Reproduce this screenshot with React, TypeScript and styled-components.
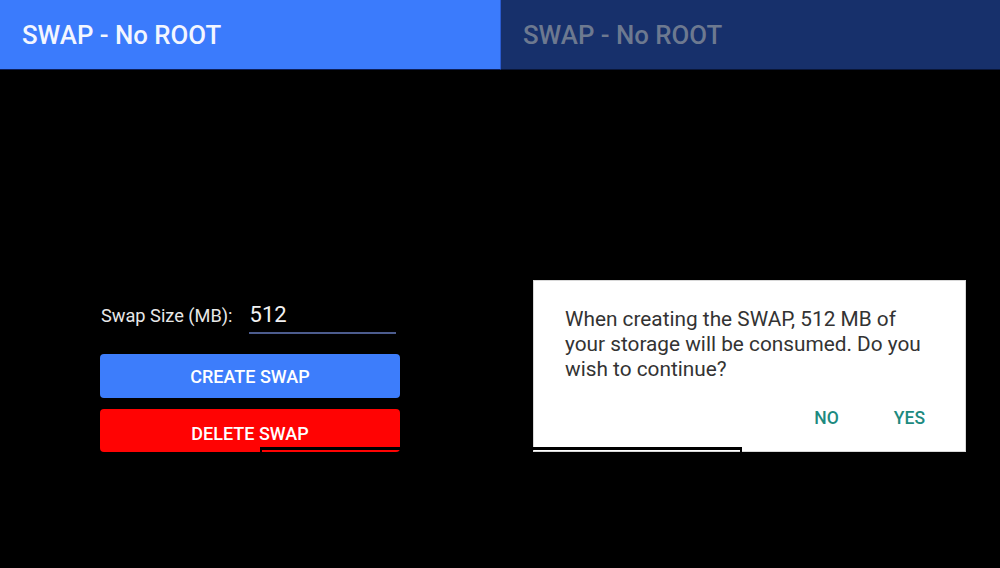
import React from "react";
import styled, { createGlobalStyle } from "styled-components";

const Global = createGlobalStyle`
  html, body { margin: 0; padding: 0; background: #000; }
  body { font-family: Roboto, "Noto Sans", "Liberation Sans", sans-serif; }
`;

const Screen = styled.div`
  position: relative;
  display: grid;
  grid-template-columns: 500px 500px;
  width: 1000px;
  height: 568px;
  background: #000;
  overflow: hidden;
`;

const Pane = styled.div`
  display: flex;
  flex-direction: column;
  min-width: 0;
`;

const AppBar = styled.header<{ $dim?: boolean }>`
  height: 70px;
  box-sizing: border-box;
  display: flex;
  align-items: center;
  padding-left: 22px;
  background: ${(p) => (p.$dim ? "#17306b" : "#3b7bfc")};
  border-left: ${(p) => (p.$dim ? "1px solid #2a5bd0" : "none")};
  border-bottom: 1px solid ${(p) => (p.$dim ? "#0a1638" : "#0d1f5a")};
`;

const Title = styled.h1<{ $dim?: boolean }>`
  margin: 0;
  font-size: 25.8px;
  font-weight: 500;
  color: ${(p) => (p.$dim ? "#6d7990" : "#f3f6ff")};
`;

const Body = styled.div<{ $top: number }>`
  flex: 1;
  padding-top: ${(p) => p.$top}px;
  box-sizing: border-box;
`;

const Form = styled.div`
  margin-left: 100px;
  width: 300px;
  display: flex;
  flex-direction: column;
`;

const SizeRow = styled.div`
  display: flex;
  align-items: baseline;
  gap: 16px;
  padding-left: 1px;
`;

const Label = styled.span`
  font-size: 18.2px;
  color: #e8e8e8;
`;

const Field = styled.div`
  width: 146px;
  font-size: 22px;
  line-height: 26px;
  color: #f2f2f2;
  padding-left: 1px;
  padding-bottom: 4px;
  border-bottom: 2px solid #4c5c8e;
`;

const ActionButton = styled.button<{ $color: string; $h: number; $mt: number; $pt?: number }>`
  margin-top: ${(p) => p.$mt}px;
  height: ${(p) => p.$h}px;
  width: 300px;
  border: none;
  border-radius: 4px;
  background: ${(p) => p.$color};
  color: #fff;
  font-family: inherit;
  font-size: 18px;
  font-weight: 500;
  padding: ${(p) => p.$pt ?? 0}px 0 0;
`;

const Dialog = styled.div`
  margin-left: 33px;
  width: 433px;
  height: 172px;
  box-sizing: border-box;
  background: #fff;
  border: 1px solid #d8d8d8;
  padding: 26px 0 0 31px;
  display: flex;
  flex-direction: column;
`;

const Message = styled.p`
  margin: 0;
  font-size: 20.8px;
  line-height: 25px;
  color: #333;
`;

const Actions = styled.div`
  display: flex;
  justify-content: flex-end;
  gap: 55px;
  padding-right: 40px;
  margin-top: 26px;
`;

const TextButton = styled.button`
  border: none;
  background: none;
  padding: 0;
  font-family: inherit;
  font-size: 17.5px;
  line-height: 20px;
  font-weight: 500;
  color: #1d8a7f;
`;

const Glitch = styled.div`
  position: absolute;
  left: 260px;
  top: 447px;
  width: 482px;
  height: 6px;
  box-sizing: border-box;
  border-top: 3px solid #000;
  border-left: 2px solid #000;
  border-right: 2px solid #000;
`;

export default function App() {
  return (
    <>
      <Global />
      <Screen>
        <Pane>
          <AppBar>
            <Title>SWAP - No ROOT</Title>
          </AppBar>
          <Body $top={232}>
            <Form>
              <SizeRow>
                <Label>Swap Size (MB):</Label>
                <Field>512</Field>
              </SizeRow>
              <ActionButton $color="#3d7dfb" $h={44} $mt={20}>
                CREATE SWAP
              </ActionButton>
              <ActionButton $color="#ff0303" $h={43} $mt={11} $pt={5}>
                DELETE SWAP
              </ActionButton>
            </Form>
          </Body>
        </Pane>
        <Pane>
          <AppBar $dim>
            <Title $dim>SWAP - No ROOT</Title>
          </AppBar>
          <Body $top={210}>
            <Dialog>
              <Message>
                When creating the SWAP, 512 MB of
                <br />
                your storage will be consumed. Do you
                <br />
                wish to continue?
              </Message>
              <Actions>
                <TextButton>NO</TextButton>
                <TextButton>YES</TextButton>
              </Actions>
            </Dialog>
          </Body>
        </Pane>
        <Glitch />
      </Screen>
    </>
  );
}
